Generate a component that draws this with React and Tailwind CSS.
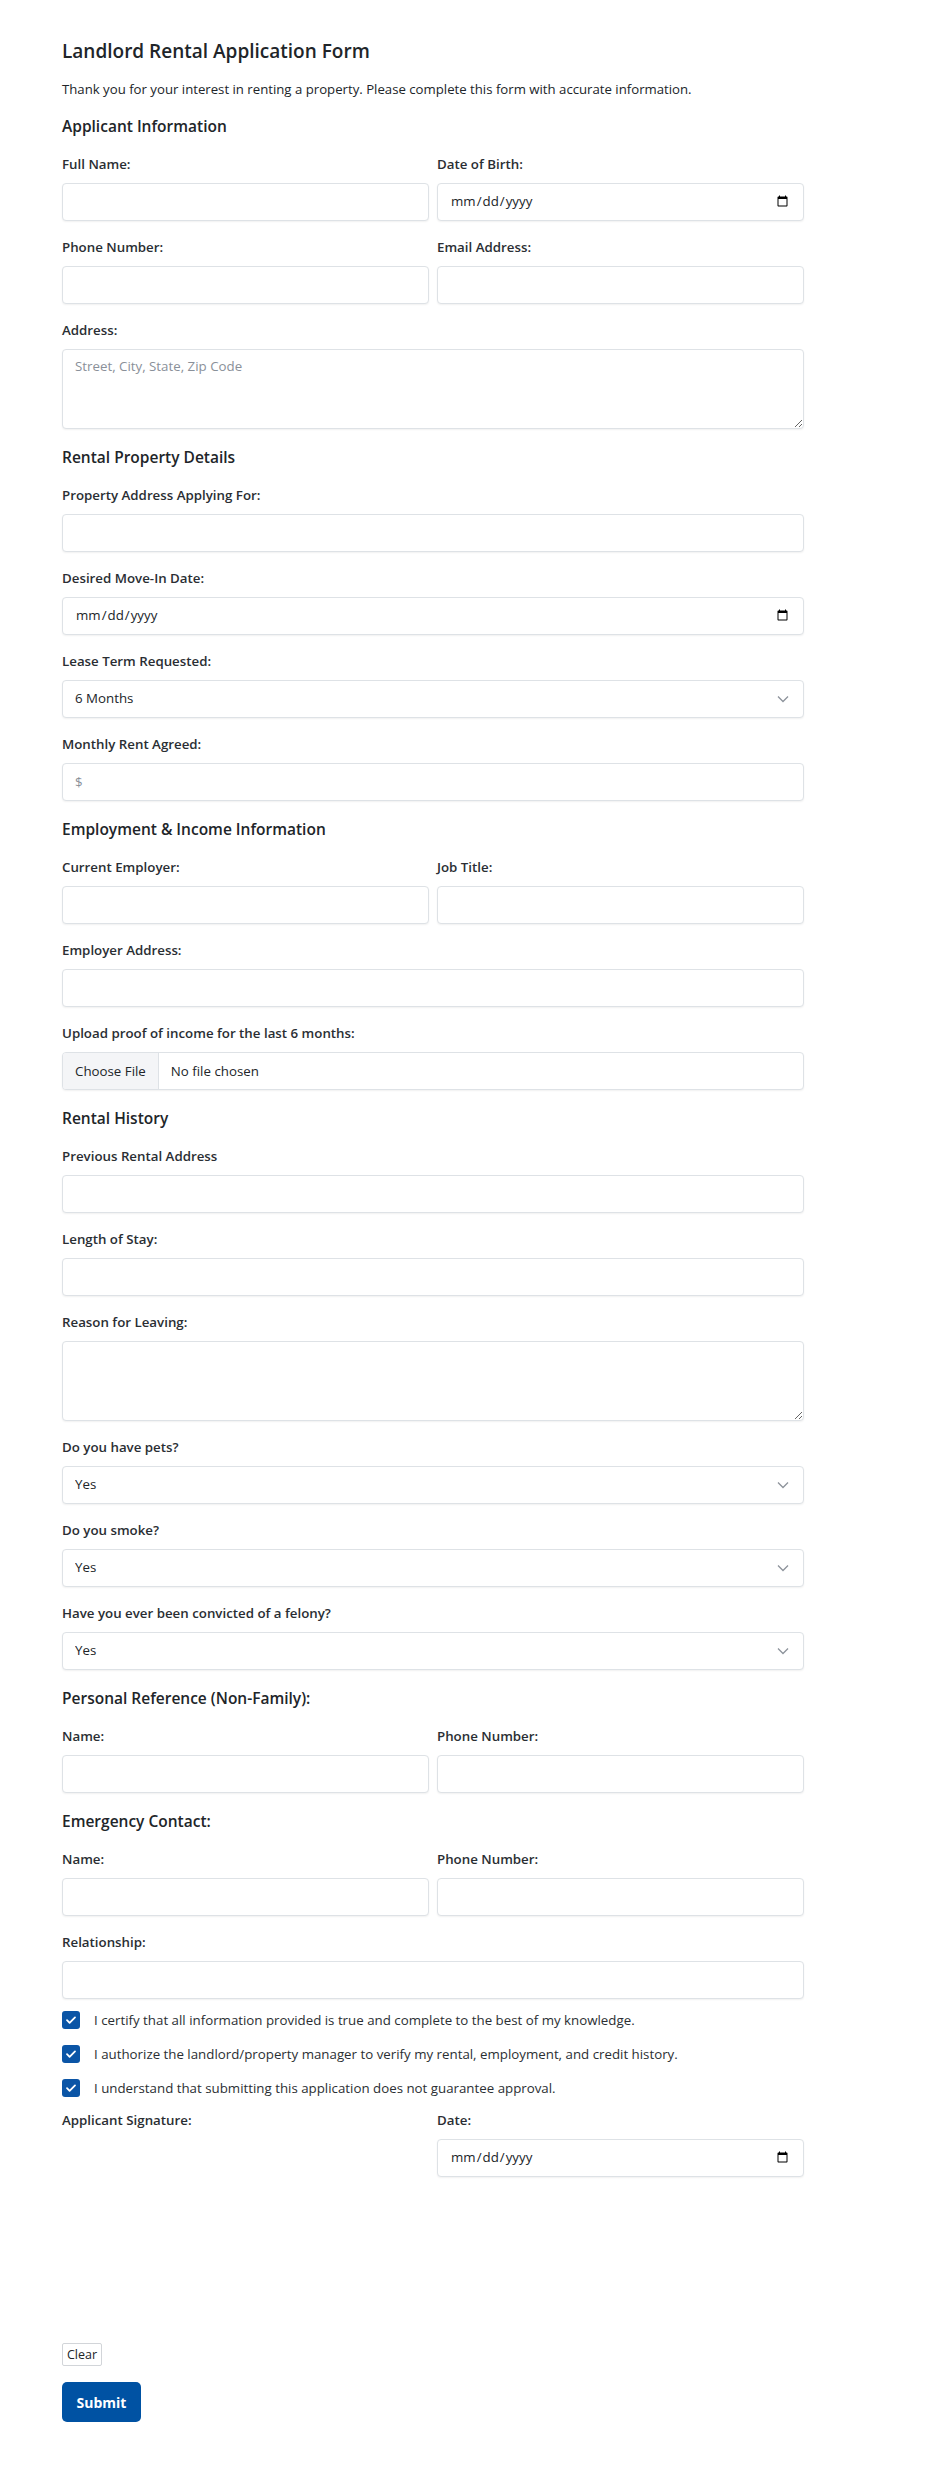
import React from 'react';

const inputCls =
  'block w-full h-[38px] rounded-[4px] border border-[#dee2e6] bg-white px-3 text-[13.3px] text-[#212529] shadow-[0_1px_2px_rgba(0,0,0,0.06)] outline-none placeholder:text-[#8a9099]';

const labelCls = 'mb-2 block text-[13.3px] font-semibold leading-[21px] text-[#2a2e33]';

function Field({ label, children }) {
  return (
    <div className="mb-4">
      <label className={labelCls}>{label}</label>
      {children}
    </div>
  );
}

function Heading({ children }) {
  return <h3 className="mb-4 text-[15.5px] font-semibold leading-6 text-[#212529]">{children}</h3>;
}

function Select({ value, options }) {
  return (
    <div className="relative">
      <select defaultValue={value} className={inputCls + ' appearance-none pr-8'}>
        {options.map((o) => (
          <option key={o}>{o}</option>
        ))}
      </select>
      <svg
        className="pointer-events-none absolute right-[15px] top-1/2 -translate-y-1/2"
        width="12"
        height="8"
        viewBox="0 0 12 8"
      >
        <path d="M1 1.5l5 5 5-5" stroke="#8d939b" strokeWidth="1.3" fill="none" />
      </svg>
    </div>
  );
}

function Check({ children }) {
  return (
    <div className="mb-[10px] flex h-6 items-center gap-[14px]">
      <span className="flex h-[18px] w-[18px] shrink-0 items-center justify-center rounded-[3px] bg-[#0b55a6]">
        <svg width="12" height="12" viewBox="0 0 12 12">
          <path d="M2 6.2l2.6 2.6L10 3.4" stroke="white" strokeWidth="1.8" fill="none" strokeLinecap="round" strokeLinejoin="round" />
        </svg>
      </span>
      <span className="text-[13.3px] leading-[21px] text-[#2b2f33]">{children}</span>
    </div>
  );
}

export default function App() {
  const yesNo = ['Yes', 'No'];

  return (
    <div className="min-h-screen bg-white font-['Open_Sans',sans-serif] text-[#212529]">
      <form className="ml-[62px] w-[742px] pb-[41px] pt-[39px]" onSubmit={(e) => e.preventDefault()}>
        <h2 className="mb-4 text-[19px] font-semibold leading-6">Landlord Rental Application Form</h2>
        <p className="mb-[14px] text-[13.2px] leading-[21px]">
          Thank you for your interest in renting a property. Please complete this form with accurate information.
        </p>

        {/* applicant */}
        <Heading>Applicant Information</Heading>
        <div className="grid grid-cols-2 gap-x-2">
          <Field label="Full Name:">
            <input type="text" className={inputCls} />
          </Field>
          <Field label="Date of Birth:">
            <input type="date" className={inputCls} />
          </Field>
          <Field label="Phone Number:">
            <input type="tel" className={inputCls} />
          </Field>
          <Field label="Email Address:">
            <input type="email" className={inputCls} />
          </Field>
        </div>
        <Field label="Address:">
          <textarea
            placeholder="Street, City, State, Zip Code"
            className={inputCls.replace('h-[38px]', 'h-[80px]') + ' py-[6px] leading-[21px]'}
          />
        </Field>

        {/* property */}
        <Heading>Rental Property Details</Heading>
        <Field label="Property Address Applying For:">
          <input type="text" className={inputCls} />
        </Field>
        <Field label="Desired Move-In Date:">
          <input type="date" className={inputCls} />
        </Field>
        <Field label="Lease Term Requested:">
          <Select value="6 Months" options={['6 Months', '12 Months', '18 Months', '24 Months']} />
        </Field>
        <Field label="Monthly Rent Agreed:">
          <input type="text" placeholder="$" className={inputCls} />
        </Field>

        {/* employment */}
        <Heading>Employment &amp; Income Information</Heading>
        <div className="grid grid-cols-2 gap-x-2">
          <Field label="Current Employer:">
            <input type="text" className={inputCls} />
          </Field>
          <Field label="Job Title:">
            <input type="text" className={inputCls} />
          </Field>
        </div>
        <Field label="Employer Address:">
          <input type="text" className={inputCls} />
        </Field>
        <Field label="Upload proof of income for the last 6 months:">
          <input
            type="file"
            className="block h-[38px] w-full overflow-hidden rounded-[4px] border border-[#dee2e6] bg-white text-[13.3px] leading-[36px] text-[#212529] shadow-[0_1px_2px_rgba(0,0,0,0.06)] file:mr-3 file:h-[36px] file:border-0 file:border-r file:border-solid file:border-[#dee2e6] file:bg-[#f4f5f7] file:px-3 file:text-[13.3px] file:text-[#212529]"
          />
        </Field>

        {/* history */}
        <Heading>Rental History</Heading>
        <Field label="Previous Rental Address">
          <input type="text" className={inputCls} />
        </Field>
        <Field label="Length of Stay:">
          <input type="text" className={inputCls} />
        </Field>
        <Field label="Reason for Leaving:">
          <textarea className={inputCls.replace('h-[38px]', 'h-[80px]') + ' py-[6px]'} />
        </Field>
        <Field label="Do you have pets?">
          <Select value="Yes" options={yesNo} />
        </Field>
        <Field label="Do you smoke?">
          <Select value="Yes" options={yesNo} />
        </Field>
        <Field label="Have you ever been convicted of a felony?">
          <Select value="Yes" options={yesNo} />
        </Field>

        {/* references */}
        <Heading>Personal Reference (Non-Family):</Heading>
        <div className="grid grid-cols-2 gap-x-2">
          <Field label="Name:">
            <input type="text" className={inputCls} />
          </Field>
          <Field label="Phone Number:">
            <input type="tel" className={inputCls} />
          </Field>
        </div>

        <Heading>Emergency Contact:</Heading>
        <div className="grid grid-cols-2 gap-x-2">
          <Field label="Name:">
            <input type="text" className={inputCls} />
          </Field>
          <Field label="Phone Number:">
            <input type="tel" className={inputCls} />
          </Field>
        </div>
        <Field label="Relationship:">
          <input type="text" className={inputCls} />
        </Field>

        <div className="-mt-[7px]">
          <Check>I certify that all information provided is true and complete to the best of my knowledge.</Check>
          <Check>I authorize the landlord/property manager to verify my rental, employment, and credit history.</Check>
          <Check>I understand that submitting this application does not guarantee approval.</Check>
        </div>

        <div className="mt-[4px] grid grid-cols-2 gap-x-2">
          <div>
            <label className={labelCls}>Applicant Signature:</label>
            {/* signature pad area */}
            <div className="h-[202px] w-full bg-white" />
            <button
              type="button"
              className="h-[23px] rounded-[2px] border border-[#d2d5d9] bg-white px-[4px] text-[12.5px] leading-[21px] text-[#212529]"
            >
              Clear
            </button>
          </div>
          <div>
            <label className={labelCls}>Date:</label>
            <input type="date" className={inputCls} />
          </div>
        </div>

        <button
          type="submit"
          className="mt-4 h-10 w-[79px] rounded-[5px] bg-[#0052a3] text-[14px] font-bold text-white"
        >
          Submit
        </button>
      </form>
    </div>
  );
}
